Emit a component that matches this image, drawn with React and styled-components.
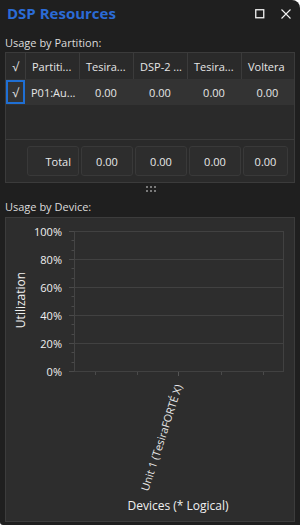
import React from "react";
import styled, { createGlobalStyle } from "styled-components";

const GlobalStyle = createGlobalStyle`
  html, body { margin: 0; padding: 0; background: #ffffff; }
  body { font-family: "Open Sans", "Noto Sans", sans-serif; }
  * { box-sizing: border-box; }
`;

const Window = styled.div`
  width: 300px;
  height: 525px;
  background: #1f1f1f;
  border-top-right-radius: 8px;
  border-bottom-left-radius: 3px;
  display: flex;
  flex-direction: column;
  overflow: hidden;
  color: #e8e8e8;
`;

const TitleBar = styled.div`
  height: 35px;
  flex: none;
  display: flex;
  align-items: flex-start;
  justify-content: space-between;
  padding: 3px 9px 0 7px;
`;

const Title = styled.div`
  font-size: 15px;
  line-height: 21px;
  font-weight: 700;
  color: #2b6bd6;
`;

const WindowButtons = styled.div`
  display: flex;
  gap: 16px;
  margin-top: 6px;
`;

const IconSvg = styled.svg`
  display: block;
  width: 10px;
  height: 10px;
`;

const SectionLabel = styled.div`
  flex: none;
  height: 15px;
  font-size: 11px;
  line-height: 15px;
  padding-left: 5px;
  margin-bottom: ${(p) => p.$gap}px;
  color: #dcdcdc;
`;

const Table = styled.div`
  flex: none;
  margin: 0 5px;
  width: 290px;
  border: 1px solid #3b3b3b;
  background: #2a2a2a;
`;

const COLS = "19px 54px 54px 54px 54px 53px";

const Row = styled.div`
  display: grid;
  grid-template-columns: ${COLS};
  height: 26px;
  background: ${(p) => (p.$selected ? "#333333" : "#2a2a2a")};
`;

const Cell = styled.div`
  display: flex;
  align-items: center;
  justify-content: ${(p) => (p.$align === "center" ? "center" : "flex-start")};
  padding-left: ${(p) => (p.$align === "center" ? 0 : 6)}px;
  font-size: 11px;
  white-space: nowrap;
  overflow: hidden;
  color: #e6e6e6;
  border-left: ${(p) => (p.$lined ? "1px solid #3b3b3b" : "none")};
`;

const CheckCell = styled.div`
  display: flex;
  align-items: center;
  justify-content: center;
  font-size: 12px;
  color: #e6e6e6;
  margin: ${(p) => (p.$focused ? "1px 0" : "0")};
  border: ${(p) => (p.$focused ? "2px solid #1f6fd4" : "none")};
`;

const Filler = styled.div`
  height: 34px;
`;

const TotalRow = styled.div`
  display: grid;
  grid-template-columns: ${COLS};
  border-top: 1px solid #3b3b3b;
  padding: 6px 0;
`;

const TotalBox = styled.div`
  height: 30px;
  margin-left: 2px;
  margin-right: ${(p) => (p.$last ? 6 : 0)}px;
  border: 1px solid #393939;
  border-radius: 3px;
  background: #2d2d2d;
  display: flex;
  align-items: center;
  justify-content: ${(p) => (p.$label ? "flex-end" : "center")};
  padding-right: ${(p) => (p.$label ? 7 : 0)}px;
  font-size: 11px;
  color: #e8e8e8;
`;

const Grip = styled.div`
  flex: none;
  height: 16px;
  display: flex;
  justify-content: center;
  padding: 3px 0 0 1px;
`;

const ChartPanel = styled.div`
  flex: none;
  margin: 0 5px;
  width: 290px;
  height: 305px;
  border: 1px solid #3c3c3c;
  background: #2d2d2d;
`;

const ChartSvg = styled.svg`
  display: block;
  font-family: "Open Sans", "Noto Sans", sans-serif;
`;

const columns = ["Partiti...", "Tesira...", "DSP-2 ...", "Tesira...", "Voltera"];

function Chart() {
  const majors = [100, 80, 60, 40, 20, 0];
  const top = 231;
  const step = 28;
  const left = 74;
  const right = 283;
  const bottom = top + step * 5;
  const minor = [];
  for (let i = 0; i < 5; i++) {
    minor.push(top + i * step + step / 3, top + i * step + (2 * step) / 3);
  }
  const xTicks = [95, 137, 221, 263];
  return (
    <ChartSvg width="288" height="303" viewBox="6 218 288 303">
      {majors.map((m, i) => (
        <line key={"g" + m} x1={left} x2={right} y1={top + i * step + 0.5} y2={top + i * step + 0.5} stroke="#414141" strokeWidth="1" />
      ))}
      <line x1={left + 0.5} x2={left + 0.5} y1={top} y2={bottom + 1} stroke="#444" strokeWidth="1" />
      <line x1={right + 0.5} x2={right + 0.5} y1={top} y2={bottom + 1} stroke="#414141" strokeWidth="1" />
      {majors.map((m, i) => (
        <line key={"t" + m} x1={69} x2={left} y1={top + i * step + 0.5} y2={top + i * step + 0.5} stroke="#4a4a4a" strokeWidth="1" />
      ))}
      {minor.map((y) => (
        <line key={"m" + y} x1={71.5} x2={left} y1={Math.round(y) + 0.5} y2={Math.round(y) + 0.5} stroke="#4a4a4a" strokeWidth="1" />
      ))}
      {xTicks.map((x) => (
        <line key={"x" + x} x1={x + 0.5} x2={x + 0.5} y1={bottom + 1} y2={bottom + 4} stroke="#4a4a4a" strokeWidth="1" />
      ))}
      <line x1={178.5} x2={178.5} y1={bottom + 1} y2={bottom + 5} stroke="#555" strokeWidth="1" />
      {majors.map((m, i) => (
        <text key={"l" + m} x={62} y={top + i * step + 4.5} fontSize="11" fill="#f0f0f0" textAnchor="end">
          {m}%
        </text>
      ))}
      <text transform="translate(25 300) rotate(-90)" fontSize="12" fill="#f0f0f0" textAnchor="middle">
        Utilization
      </text>
      <text transform="translate(182.5 386) rotate(-72)" fontSize="10.8" fill="#e8e8e8" textAnchor="end">
        Unit 1 (TesiraFORTÉ X)
      </text>
      <text x={178} y={510} fontSize="12" fill="#f0f0f0" textAnchor="middle">
        Devices (* Logical)
      </text>
    </ChartSvg>
  );
}

export default function App() {
  return (
    <>
      <GlobalStyle />
      <Window>
        <TitleBar>
          <Title>DSP Resources</Title>
          <WindowButtons>
            <IconSvg viewBox="0 0 10 10">
              <rect x="0.75" y="0.75" width="8" height="8" fill="none" stroke="#f2f2f2" strokeWidth="1.3" />
            </IconSvg>
            <IconSvg viewBox="0 0 10 10">
              <path d="M0.5 0.5 L9.5 9.5 M9.5 0.5 L0.5 9.5" stroke="#f2f2f2" strokeWidth="1.1" />
            </IconSvg>
          </WindowButtons>
        </TitleBar>
        <SectionLabel $gap={2}>Usage by Partition:</SectionLabel>
        <Table>
          <Row>
            <CheckCell>√</CheckCell>
            {columns.map((c, i) => (
              <Cell key={i} $lined>
                {c}
              </Cell>
            ))}
          </Row>
          <Row $selected>
            <CheckCell $focused>√</CheckCell>
            <Cell>P01:Au...</Cell>
            {[0, 1, 2, 3].map((i) => (
              <Cell key={i} $align="center">
                0.00
              </Cell>
            ))}
          </Row>
          <Filler />
          <TotalRow>
            <div />
            <TotalBox $label>Total</TotalBox>
            <TotalBox>0.00</TotalBox>
            <TotalBox>0.00</TotalBox>
            <TotalBox>0.00</TotalBox>
            <TotalBox $last>0.00</TotalBox>
          </TotalRow>
        </Table>
        <Grip>
          <svg width="10" height="6" viewBox="0 0 10 6">
            {[0, 4, 8].map((x) =>
              [0, 4].map((y) => <rect key={x + "-" + y} x={x} y={y} width="2" height="2" fill="#7a7a7a" />)
            )}
          </svg>
        </Grip>
        <SectionLabel $gap={3}>Usage by Device:</SectionLabel>
        <ChartPanel>
          <Chart />
        </ChartPanel>
      </Window>
    </>
  );
}
